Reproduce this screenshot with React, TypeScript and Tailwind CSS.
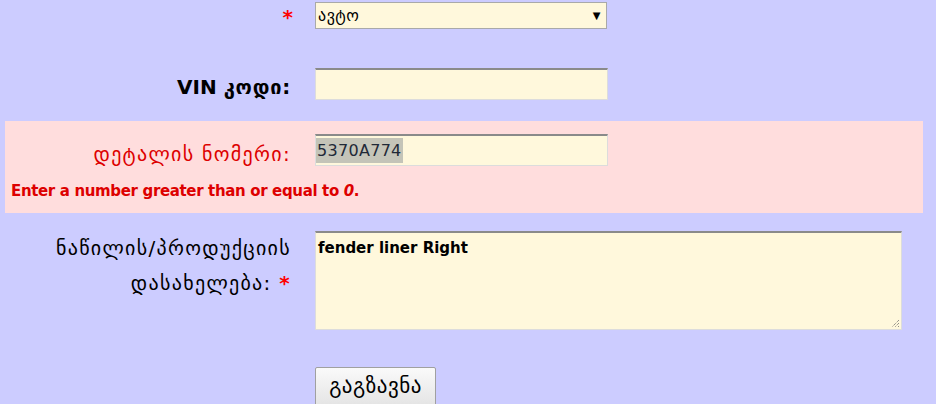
export default function App() {
  const geo = { fontFamily: '"DejaVu Sans", "Noto Sans", sans-serif' };

  return (
    <div className="w-[936px] h-[404px] overflow-hidden bg-[#ccccff]" style={geo}>
      <div className="w-[918px] ml-[5px]">
        {/* category select */}
        <div className="flex items-start h-[29px] pt-[2px]">
          <div className="w-[310px] pr-[22px] pt-[5px] text-right text-[20px] leading-[20px] font-bold text-[#ff0000]">*</div>
          <div className="w-[292px] h-[27px] flex items-center justify-between px-[2px] bg-[#fff8dc] border border-[#a9a9a9] text-[16px] tracking-[0.5px] text-black">
            <span>ავტო</span>
            <span className="text-[10px] pr-[3px]">▼</span>
          </div>
        </div>

        {/* VIN */}
        <div className="flex items-start h-[32px] mt-[39px]">
          <div className="w-[310px] pr-[24px] pt-[6px] text-right text-[20px] leading-[26px] font-bold text-black">
            VIN <span className="tracking-[0.8px]">კოდი:</span>
          </div>
          <div className="w-[293px] h-[32px] bg-[#fff8dc] border border-[#dcdcdc] border-t-[2px] border-t-[#8a8a8a]" />
        </div>

        {/* part number with error */}
        <div className="mt-[21px] h-[92px] bg-[#ffdddd] pt-[13px]">
          <div className="flex items-start h-[32px]">
            <div className="w-[310px] pr-[24px] pt-[7px] text-right text-[20px] leading-[26px] tracking-[1.3px] text-[#dd0000]">დეტალის ნომერი:</div>
            <div className="w-[293px] h-[32px] flex items-center bg-[#fff8dc] border border-[#dcdcdc] border-t-[2px] border-t-[#8a8a8a]">
              <span className="bg-[#c4c4b8] text-[#1f2937] text-[16px] leading-[25px] px-[1px] tracking-[0.3px]">5370A774</span>
            </div>
          </div>
          <div className="pl-[6px] mt-[15px] text-[15px] leading-[20px] font-bold text-[#dd0000] tracking-[-0.35px]">
            Enter a number greater than or equal to <i>0</i>.
          </div>
        </div>

        {/* name textarea */}
        <div className="flex items-start mt-[18px]">
          <div className="w-[310px] pr-[24px] text-right text-[20px] leading-[35px] tracking-[1.3px] text-black">
            <div>ნაწილის/პროდუქციის</div>
            <div>
              დასახელება: <span className="text-[#ff0000] font-bold text-[20px] leading-none">*</span>
            </div>
          </div>
          <div className="relative w-[587px] h-[99px] bg-[#fff8dc] border border-[#dcdcdc] border-t-[2px] border-t-[#8a8a8a] px-[2px] pt-[4px] text-[15px] font-bold text-black">
            fender liner Right
            <svg className="absolute right-[1px] bottom-[1px]" width="9" height="9" viewBox="0 0 9 9">
              <path d="M8 1L1 8M8 4L4 8M8 7L7 8" stroke="#666" strokeWidth="1" strokeDasharray="1 1" />
            </svg>
          </div>
        </div>

        {/* submit */}
        <div className="flex mt-[37px]">
          <div className="w-[310px]" />
          <button className="w-[121px] h-[40px] bg-gradient-to-b from-[#fafafa] to-[#e4e4e4] border border-[#a0a0a0] rounded-[2px] text-[21px] tracking-[0.5px] text-black">
            გაგზავნა
          </button>
        </div>
      </div>
    </div>
  );
}
